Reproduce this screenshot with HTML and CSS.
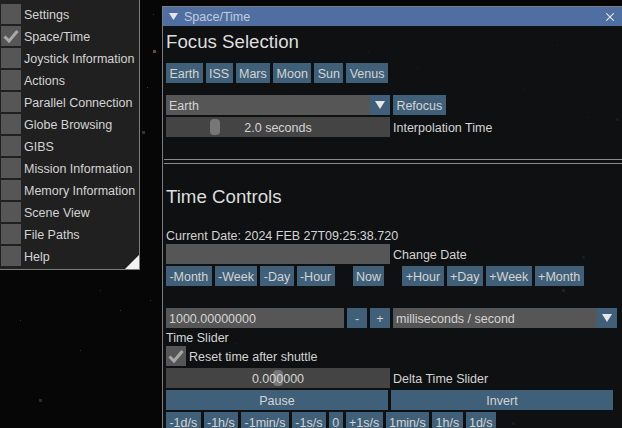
FILE: index.html
```html
<!DOCTYPE html>
<html>
	<head>
		<meta charset="UTF-8">
		<title>Space/Time</title>
		<link rel="stylesheet" href="styles.css">
	</head>
	<body>
		<!--star background-->
		<div class="stars"></div>

		<!--menu of windows-->
		<div class="menu">
			<div class="menu-row"><span class="check"></span>Settings</div>
			<div class="menu-row"><span class="check"><svg width="20" height="20" viewBox="0 0 20 20"><path d="M3.5 10.5 L8 15 L16.5 5" fill="none" stroke="#a8a8a8" stroke-width="3"/></svg></span>Space/Time</div>
			<div class="menu-row"><span class="check"></span>Joystick Information</div>
			<div class="menu-row"><span class="check"></span>Actions</div>
			<div class="menu-row"><span class="check"></span>Parallel Connection</div>
			<div class="menu-row"><span class="check"></span>Globe Browsing</div>
			<div class="menu-row"><span class="check"></span>GIBS</div>
			<div class="menu-row"><span class="check"></span>Mission Information</div>
			<div class="menu-row"><span class="check"></span>Memory Information</div>
			<div class="menu-row"><span class="check"></span>Scene View</div>
			<div class="menu-row"><span class="check"></span>File Paths</div>
			<div class="menu-row"><span class="check"></span>Help</div>
			<div class="grip"></div>
		</div>

		<!--Space/Time window-->
		<div class="win">
			<div class="title">
				<svg class="title-arrow" width="9" height="7" viewBox="0 0 9 7"><path d="M0 0 H9 L4.5 7 Z" fill="#e6e6e6"/></svg>
				<span class="title-text">Space/Time</span>
				<svg class="title-close" width="8" height="8" viewBox="0 0 8 8"><path d="M0.3 0.3 L7.7 7.7 M7.7 0.3 L0.3 7.7" stroke="#e6e6e6" stroke-width="1.1"/></svg>
			</div>
			<div class="content">
				<h2 class="head head-focus">Focus Selection</h2>
				<div class="row row-focus">
					<a class="btn">Earth</a><a class="btn">ISS</a><a class="btn">Mars</a><a class="btn">Moon</a><a class="btn">Sun</a><a class="btn">Venus</a>
				</div>
				<div class="row row-combo">
					<div class="combo wide"><span class="combo-text">Earth</span><span class="combo-arrow"><svg width="10" height="8" viewBox="0 0 10 8"><path d="M0 0 H10 L5 8 Z" fill="#e6e6e6"/></svg></span></div>
					<a class="btn">Refocus</a>
				</div>
				<div class="row">
					<div class="slider wide"><span class="grab grab-time"></span><span class="slider-text">2.0 seconds</span></div>
					<span class="label">Interpolation Time</span>
				</div>
				<div class="sep"></div>
				<h2 class="head head-time">Time Controls</h2>
				<div class="line">Current Date: 2024 FEB 27T09:25:38.720</div>
				<div class="row row-tight">
					<div class="input wide"></div>
					<span class="label">Change Date</span>
				</div>
				<div class="row">
					<a class="btn">-Month</a><a class="btn">-Week</a><a class="btn">-Day</a><a class="btn">-Hour</a>
					<a class="btn now">Now</a>
					<a class="btn plus">+Hour</a><a class="btn">+Day</a><a class="btn">+Week</a><a class="btn">+Month</a>
				</div>
				<div class="row row-delta">
					<div class="input input-delta">1000.00000000</div>
					<a class="btn square">-</a><a class="btn square">+</a>
					<div class="combo wide"><span class="combo-text">milliseconds / second</span><span class="combo-arrow"><svg width="10" height="8" viewBox="0 0 10 8"><path d="M0 0 H10 L5 8 Z" fill="#e6e6e6"/></svg></span></div>
				</div>
				<div class="line">Time Slider</div>
				<div class="row row-tight">
					<span class="check"><svg width="20" height="20" viewBox="0 0 20 20"><path d="M3.5 10.5 L8 15 L16.5 5" fill="none" stroke="#a8a8a8" stroke-width="3"/></svg></span>
					<span class="label">Reset time after shuttle</span>
				</div>
				<div class="row">
					<div class="slider wide"><span class="grab grab-delta"></span><span class="slider-text">0.000000</span></div>
					<span class="label">Delta Time Slider</span>
				</div>
				<div class="row">
					<a class="btn half">Pause</a><a class="btn half">Invert</a>
				</div>
				<div class="row">
					<a class="btn">-1d/s</a><a class="btn">-1h/s</a><a class="btn">-1min/s</a><a class="btn">-1s/s</a><a class="btn">0</a><a class="btn">+1s/s</a><a class="btn">1min/s</a><a class="btn">1h/s</a><a class="btn">1d/s</a>
				</div>
			</div>
		</div>
	</body>
</html>
```

FILE: styles.css
```css
*{
	margin: 0;
	padding: 0;
	box-sizing: border-box;
}
html, body{
	width: 622px;
	height: 428px;
	overflow: hidden;
	background-color: #060606;
}
body{
	position: relative;
	font-family: "Liberation Sans", Arial, sans-serif;
	font-size: 12.5px;
	color: #d4d4d4;
}
/*one pixel star, the rest are its shadows*/
.stars{
	position: absolute;
	left: 0;
	top: 0;
	width: 1px;
	height: 1px;
	background-color: #555;
	box-shadow:
		153px 14px 0 0 #333,
		154px 51px 0 1px #6a4a30,
		147px 87px 0 0 #3a3a3a,
		143px 132px 0 1px #333,
		150px 300px 0 0 #333,
		80px 350px 0 0 #333,
		40px 400px 0 1px #2c2c2c,
		120px 310px 0 0 #3a3a3a,
		100px 290px 0 0 #2c2c2c,
		20px 320px 0 0 #333,
		417px 68px 0 0 #8a8a60,
		557px 45px 0 0 #888,
		524px 89px 0 0 #888,
		587px 117px 0 0 #8a8a60,
		617px 119px 0 1px #555,
		563px 290px 0 1px #8a8a50,
		583px 257px 0 1px #555,
		513px 423px 0 1px #555,
		259px 223px 0 0 #8a8a60,
		315px 261px 0 0 #888,
		198px 96px 0 0 #888,
		293px 91px 0 0 #8a6a40,
		368px 52px 0 0 #888,
		310px 318px 0 0 #8a8a60,
		235px 343px 0 0 #888,
		450px 180px 0 0 #555,
		500px 220px 0 0 #555,
		540px 350px 0 0 #555,
		470px 385px 0 0 #555,
		600px 60px 0 0 #555,
		480px 150px 0 0 #555;
}
.menu{
	position: absolute;
	left: 0;
	top: -8px;
	width: 140px;
	height: 278px;
	padding: 12px 0 0 1px;
	background-color: #202020;
	border-right: 1px solid #7d7d7d;
	border-bottom: 1px solid #7d7d7d;
}
.menu-row{
	display: flex;
	height: 20px;
	line-height: 22px;
	margin-bottom: 2px;
	gap: 3px;
	white-space: nowrap;
}
.check{
	display: block;
	flex: none;
	width: 20px;
	height: 20px;
	background-color: #565656;
}
.check svg{
	display: block;
}
.grip{
	position: absolute;
	right: 0;
	bottom: 0;
	width: 0;
	height: 0;
	border-left: 14px solid transparent;
	border-bottom: 14px solid #f2f2f2;
}
.win{
	position: absolute;
	left: 162px;
	top: 6px;
	width: 470px;
	height: 440px;
	background-color: rgba(17, 18, 19, 0.88);
	border: 1px solid #7d7d7d;
}
.title{
	display: flex;
	align-items: center;
	height: 19px;
	padding-left: 6px;
	background-color: #4f6fa3;
}
.title-text{
	margin-left: 6px;
	padding-top: 1px;
	flex: 1;
	color: #c4ccd8;
}
.title-close{
	margin-right: 17px;
}
.content{
	padding-left: 3px;
}
.head{
	font-size: 18.7px;
	font-weight: normal;
	line-height: 22px;
	height: 22px;
	color: #dedede;
	white-space: nowrap;
}
.head-focus{
	margin-top: 5px;
	margin-bottom: 10px;
}
.head-time{
	margin-top: 22px;
	margin-bottom: 20px;
}
.row{
	display: flex;
	gap: 3px;
	height: 20px;
	margin-bottom: 2px;
	white-space: nowrap;
}
.row-focus{
	margin-bottom: 12px;
}
.row-tight{
	margin-bottom: 2px;
}
.row-delta{
	margin-top: 22px;
}
.btn{
	display: block;
	flex: none;
	height: 20px;
	line-height: 22px;
	padding: 0 3.4px;
	background-color: #3f6078;
}
.now{
	margin-left: 15px;
}
.plus{
	margin-left: 15px;
}
.square{
	width: 20px;
	text-align: center;
}
.half{
	width: 222px;
	text-align: center;
}
.wide{
	width: 224px;
	flex: none;
}
.combo{
	display: flex;
	height: 20px;
	line-height: 22px;
	background-color: #565656;
}
.combo-text{
	flex: 1;
	padding-left: 3px;
}
.combo-arrow{
	display: flex;
	align-items: center;
	justify-content: center;
	width: 20px;
	background-color: #3f6078;
}
.slider{
	position: relative;
	height: 20px;
	line-height: 22px;
	text-align: center;
	background-color: #444;
}
.slider-text{
	position: relative;
}
.grab{
	position: absolute;
	top: 2px;
	width: 10px;
	height: 16px;
	border-radius: 4px;
	background-color: #777;
}
.grab-time{
	left: 44px;
}
.grab-delta{
	left: 107px;
}
.label{
	line-height: 22px;
}
.input{
	height: 20px;
	line-height: 22px;
	padding-left: 3px;
	background-color: #565656;
}
.input-delta{
	width: 178px;
	flex: none;
}
.line{
	height: 16px;
	line-height: 16px;
	white-space: nowrap;
}
.sep{
	margin-top: 22px;
	margin-left: -2px;
	height: 5px;
	border-top: 1px solid #8a8a8a;
	border-bottom: 1px solid #8a8a8a;
}
```
